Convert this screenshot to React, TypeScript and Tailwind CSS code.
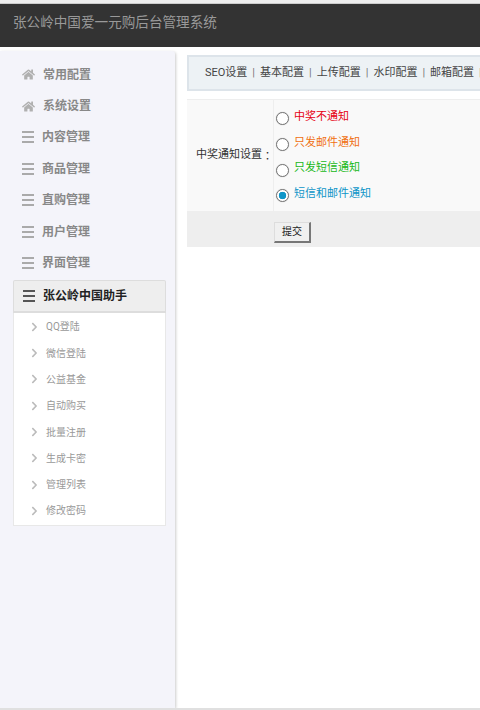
import { FaHome, FaChevronRight } from 'react-icons/fa';

const cjk = 'font-["Roboto","Noto_Sans_CJK_SC",sans-serif]';

const menus = [
  { name: '常用配置', home: true },
  { name: '系统设置', home: true },
  { name: '内容管理' },
  { name: '商品管理' },
  { name: '直购管理' },
  { name: '用户管理' },
  { name: '界面管理' },
];

const subMenus = ['QQ登陆', '微信登陆', '公益基金', '自动购买', '批量注册', '生成卡密', '管理列表', '修改密码'];

const tabs = ['SEO设置', '基本配置', '上传配置', '水印配置', '邮箱配置'];

const options = [
  { label: '中奖不通知', color: 'text-[#e60012]' },
  { label: '只发邮件通知', color: 'text-[#f07010]' },
  { label: '只发短信通知', color: 'text-[#18b818]' },
  { label: '短信和邮件通知', color: 'text-[#0e95c8]', checked: true },
];

function Bars() {
  return (
    <span className="flex w-[12px] shrink-0 flex-col gap-[3px]">
      <span className="h-[2px] bg-current" />
      <span className="h-[2px] bg-current" />
      <span className="h-[2px] bg-current" />
    </span>
  );
}

function Sidebar() {
  return (
    <aside className="flex h-[657px] w-[175px] shrink-0 flex-col rounded-tr-[3px] bg-[#f4f4fa] pl-[13px] pr-[9px] pt-[8px] shadow-[1px_1px_3px_rgba(0,0,0,0.2)]">
      <ul className="flex flex-col">
        {menus.map((m) => (
          <li key={m.name} className="flex h-[31.4px] items-center text-[12px] font-bold text-[#888888]">
            {m.home ? (
              <FaHome className="ml-[9px] mr-[8px] h-[13px] w-[13px] shrink-0 text-[#b0b0b0]" />
            ) : (
              <span className="ml-[9px] mr-[8px] text-[#aaaaaa]">
                <Bars />
              </span>
            )}
            <span>{m.name}</span>
          </li>
        ))}
      </ul>
      <div className="mt-[1px] flex h-[33px] items-center rounded-t-[2px] border border-[#dddddd] border-b-2 bg-[#eeeeee] pl-[9px] text-[12px] font-bold text-[#222222]">
        <span className="mr-[8px] text-[#555555]">
          <Bars />
        </span>
        <span>张公岭中国助手</span>
      </div>
      <ul className="border-x border-b border-[#e8e8e8] bg-white pb-[1px] pt-[1px]">
        {subMenus.map((s) => (
          <li key={s} className="flex h-[26.3px] items-center text-[10px] text-[#999999]">
            <FaChevronRight className="ml-[16px] mr-[7px] h-[10px] w-[9px] shrink-0 text-[#bbbbbb]" />
            <span>{s}</span>
          </li>
        ))}
      </ul>
    </aside>
  );
}

function Content() {
  return (
    <main className="min-w-0 flex-1 pl-[12px] pt-[4px]">
      <div className="flex h-[36px] items-center gap-[5px] overflow-hidden whitespace-nowrap border-y-2 border-l-2 border-[#dde4ea] bg-[#edf2f5] pl-[16px] text-[11px] text-[#444444]">
        {tabs.map((t) => (
          <span key={t} className="flex items-center gap-[5px]">
            <span>{t}</span>
            <span className="text-[#777777]">|</span>
          </span>
        ))}
      </div>
      <div className="mt-[8px]">
        <div className="flex h-[112px] border-t border-[#eeeeee] bg-[#f9f9f9]">
          <div className="flex w-[87px] shrink-0 items-center justify-end border-r border-[#eeeeee] text-[11px] text-[#333333]">
            <span>中奖通知设置</span>
            <span className='font-["Noto_Sans_CJK_TC",sans-serif]'>：</span>
          </div>
          <div className="flex flex-col pt-[6px]">
            {options.map((o) => (
              <label key={o.label} className={`flex h-[25.7px] items-center text-[11px] ${o.color}`}>
                <input
                  type="radio"
                  name="notice"
                  defaultChecked={o.checked}
                  className="ml-[2px] mr-[5px] h-[13px] w-[13px] appearance-none rounded-full border-[1.5px] border-[#777777] bg-white shadow-[0_0_1px_rgba(0,0,0,0.3)] checked:bg-[radial-gradient(circle,#0e95c8_45%,#ffffff_52%)]"
                />
                <span className="-mt-[3px]">{o.label}</span>
              </label>
            ))}
          </div>
        </div>
        <div className="h-[36px] bg-[#eeeeee] pl-[87px] pt-[7px]">
          <button className="h-[21px] w-[37px] border border-b-2 border-r-2 border-[#777777] border-l-[#dddddd] border-t-[#dddddd] bg-[#f0f0f0] text-[10px] text-[#222222]">
            提交
          </button>
        </div>
      </div>
    </main>
  );
}

export default function App() {
  return (
    <div className={`flex h-[710px] w-[480px] flex-col overflow-hidden bg-white ${cjk}`}>
      <div className="h-[4px] border-b border-[#cccccc] bg-[#eeeeee]" />
      <header className="flex h-[43px] items-center bg-[#333333] pb-[6px] pl-[13px] text-[13.6px] text-[#999999]">
        张公岭中国爱一元购后台管理系统
      </header>
      <div className="mt-[4px] flex flex-1 items-start">
        <Sidebar />
        <Content />
      </div>
      <div className="h-[2px] bg-[#e0e0e0]" />
    </div>
  );
}
